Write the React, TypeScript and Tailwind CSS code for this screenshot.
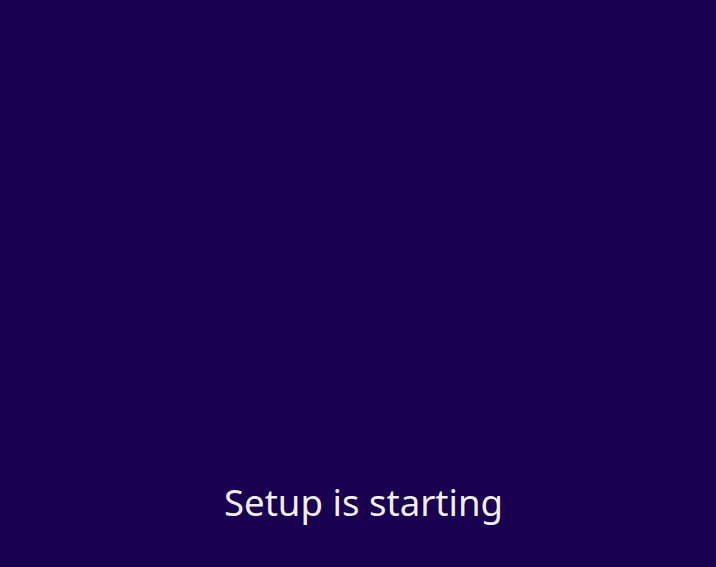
export default function App() {
  return (
    <div className="flex h-[567px] w-full flex-col items-center justify-end bg-[#190050] pb-[41px] pl-[11px]">
      <p className="font-['Noto_Sans',sans-serif] text-[36.6px] leading-[48px] text-white/95">
        Setup is starting
      </p>
    </div>
  );
}
